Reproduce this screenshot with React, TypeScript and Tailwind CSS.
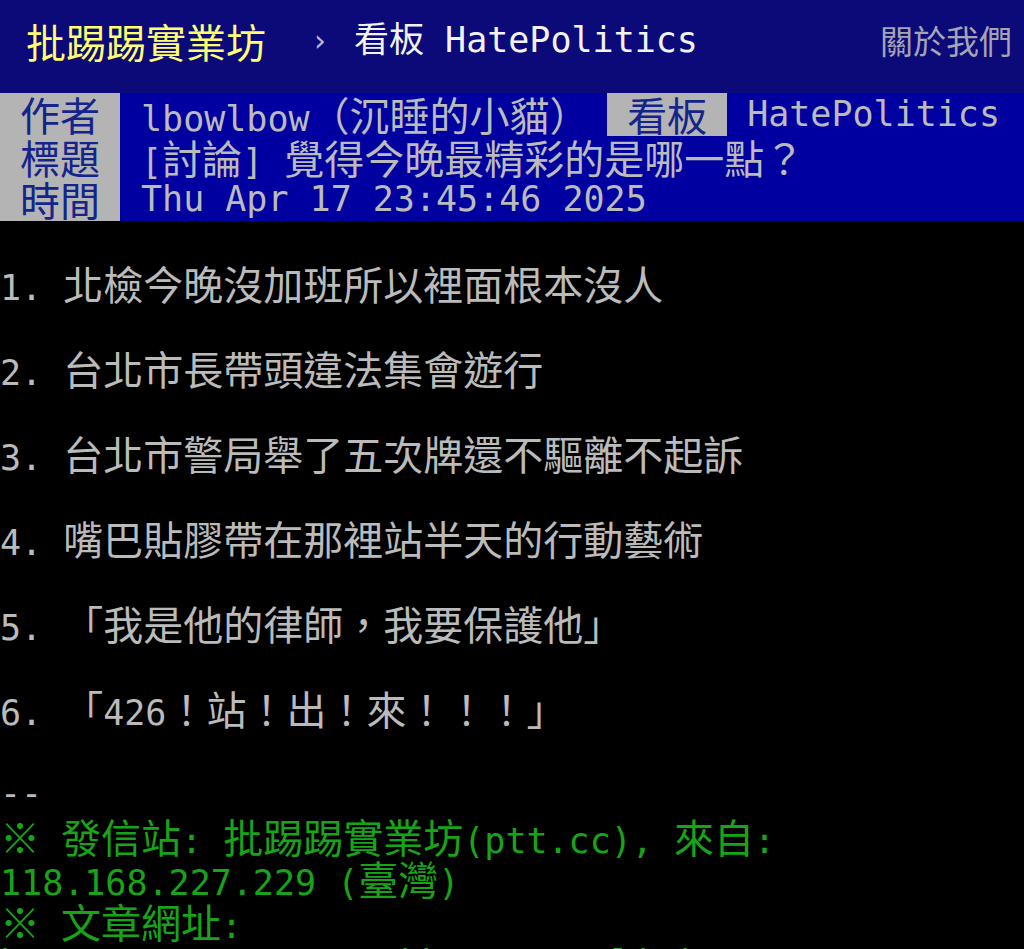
import React from "react";

// full-width runs (CJK, punctuation, ※) render in the CJK face at a wider size
const CJK = /([\u2E80-\u9FFF\u3000-\u303F\uFF00-\uFFEF\u203B]+)/;

function Mixed({ text }: { text: string }) {
  const parts = text.split(CJK).filter((p) => p.length > 0);
  return (
    <>
      {parts.map((p, i) =>
        CJK.test(p) ? (
          <span key={i} className="font-['Noto_Sans_CJK_TC',sans-serif] text-[40px]">
            {p}
          </span>
        ) : (
          <span key={i} className="font-['DejaVu_Sans_Mono',monospace] text-[35px]">
            {p}
          </span>
        )
      )}
    </>
  );
}

function Line({ text, color = "text-[#bbbbbb]" }: { text: string; color?: string }) {
  return (
    <div className={`h-[42.5px] leading-[42.5px] whitespace-pre ${color}`}>
      <Mixed text={text} />
    </div>
  );
}

function MetaLabel({ label }: { label: string }) {
  return (
    <div className="w-[120px] shrink-0 bg-[#b4b4b4] text-center text-[#14248a] font-['Noto_Sans_CJK_TC',sans-serif] text-[40px] leading-[42.5px]">
      {label}
    </div>
  );
}

const body = [
  "",
  "1. 北檢今晚沒加班所以裡面根本沒人",
  "",
  "2. 台北市長帶頭違法集會遊行",
  "",
  "3. 台北市警局舉了五次牌還不驅離不起訴",
  "",
  "4. 嘴巴貼膠帶在那裡站半天的行動藝術",
  "",
  "5. 「我是他的律師，我要保護他」",
  "",
  "6. 「426！站！出！來！！！」",
  "",
  "--",
];

const footer = [
  "※ 發信站: 批踢踢實業坊(ptt.cc), 來自:",
  "118.168.227.229 (臺灣)",
  "※ 文章網址:",
  "https://www.ptt.cc/bbs/HatePolitics/M.1744904748.A.5C9.html",
];

export default function App() {
  return (
    <div className="w-[1024px] h-[949px] overflow-hidden bg-black">
      {/* top bar */}
      <div className="h-[93px] bg-[#0c0a78] flex items-center pb-[12px]">
        <span className="ml-[26px] font-['Noto_Sans_CJK_TC',sans-serif] text-[40px] text-[#ffff6e] leading-none">
          批踢踢實業坊
        </span>
        <span className="ml-[48px] font-['DejaVu_Sans',sans-serif] text-[30px] text-[#b8b8d0] leading-none">
          ›
        </span>
        <span className="ml-[28px] whitespace-pre font-['DejaVu_Sans_Mono','Noto_Sans_CJK_TC',monospace] text-[35px] text-[#f2f2f2] leading-none">
          看板 HatePolitics
        </span>
        <span className="ml-auto mr-[12px] font-['Noto_Sans_CJK_TC',sans-serif] text-[33px] text-[#a4a4b4] leading-none">
          關於我們
        </span>
      </div>

      {/* article meta */}
      <div className="bg-[#0000a0]">
        <div className="flex h-[42.5px]">
          <MetaLabel label="作者" />
          <div className="pl-[21px] whitespace-pre text-[#bbbbbb] leading-[42.5px]">
            <Mixed text="lbowlbow（沉睡的小貓）" />
          </div>
          <div className="ml-auto flex">
            <MetaLabel label="看板" />
            <div className="pl-[20px] pr-[24px] text-[#bbbbbb] leading-[42.5px] font-['DejaVu_Sans_Mono',monospace] text-[35px]">
              HatePolitics
            </div>
          </div>
        </div>
        <div className="flex h-[42.5px]">
          <MetaLabel label="標題" />
          <div className="pl-[21px] whitespace-pre text-[#bbbbbb] leading-[42.5px]">
            <Mixed text="[討論] 覺得今晚最精彩的是哪一點？" />
          </div>
        </div>
        <div className="flex h-[42.5px]">
          <MetaLabel label="時間" />
          <div className="pl-[21px] whitespace-pre text-[#bbbbbb] leading-[42.5px]">
            <Mixed text="Thu Apr 17 23:45:46 2025" />
          </div>
        </div>
      </div>

      {/* article body */}
      <div className="-mt-[1px]">
        {body.map((t, i) => (
          <Line key={i} text={t} />
        ))}
        {footer.map((t, i) => (
          <Line key={`f${i}`} text={t} color="text-[#18a418]" />
        ))}
      </div>
    </div>
  );
}
